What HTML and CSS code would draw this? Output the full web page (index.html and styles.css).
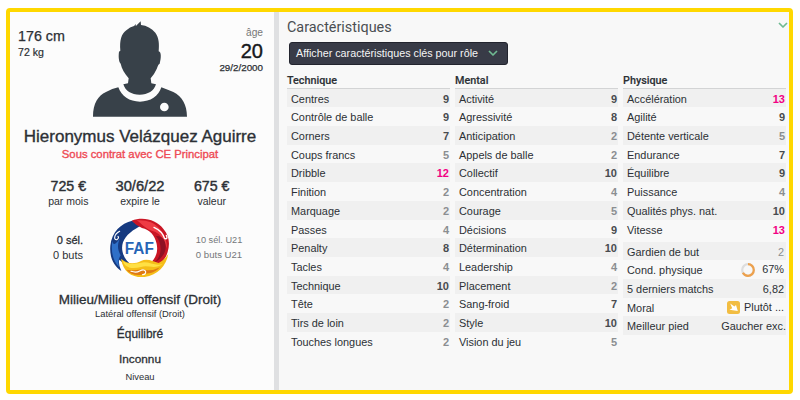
FILE: index.html
```html
<!DOCTYPE html>
<html lang="fr">
<head>
<meta charset="utf-8">
<title>Hieronymus Velázquez Aguirre</title>
<link rel="stylesheet" href="styles.css">
</head>
<body>
<main class="frame">
  <section class="profile">
    <header class="top">
      <div class="body-size"><div class="height">176 cm</div><div class="weight">72 kg</div></div>
      <svg class="avatar" viewBox="25 20 282 287">
        <path fill="#384149" d="M25 307C25 268 40 244 64 233Q83 223 101 219C111 246 134 262 166 262C198 262 221 246 230 219Q248 226 266 233C292 246 307 271 307 307Z"/>
        <path fill="#384149" d="M116 210L130 207L132 192C120 178 111 163 108 148C102 142 101 125 103 112L107 109C104 79 110 58 125 48Q136 38 148 35L154 29L153 36L168 21L169 32C186 34 201 42 212 55C223 70 224 89 222 111C230 112 230 130 225 148C220 150 220 155 216 164Q209 180 198 192L200 207L214 210C208 230 190 241 165 241C140 241 122 230 116 210Z"/>
        <circle cx="239" cy="278" r="13" fill="#fcfcfc"/>
      </svg>
      <div class="age-box"><div class="age-label">âge</div><div class="age">20</div><div class="birth">29/2/2000</div></div>
    </header>
    <h1 class="name">Hieronymus Velázquez Aguirre</h1>
    <div class="contract">Sous contrat avec CE Principat</div>
    <div class="facts">
      <div><div class="fact">725 €</div><div class="fact-label">par mois</div></div>
      <div><div class="fact wide">30/6/22</div><div class="fact-label">expire le</div></div>
      <div><div class="fact">675 €</div><div class="fact-label">valeur</div></div>
    </div>
    <div class="national">
      <div class="caps"><div class="medium">0 sél.</div><div>0 buts</div></div>
      <svg class="crest" viewBox="12 12 184 184">
        <circle cx="104" cy="104" r="90" fill="#fff"/>
        <path fill="#163a80" d="M82 23C48 30 20 58 16 98C13 132 25 158 49 174Q39 153 43 140C56 153 69 158 82 158C56 140 46 112 54 88C62 66 84 50 112 36Q92 34 82 23Z"/>
        <path fill="#2f70c8" d="M22 84C17 119 25 145 42 162C38 145 42 134 47 127C36 108 37 90 46 76C33 92 26 101 22 84Z"/>
        <path fill="none" stroke="#fff" stroke-width="3.5" stroke-linecap="round" d="M44 55C25 65 26 83 36 80Q43 74 39 70"/>
        <path fill="#c91625" d="M80 23C113 10 155 19 176 49C192 68 196 91 188 117C182 139 168 155 144 161L132 154C153 137 160 116 155 92C150 68 134 49 111 45Q94 38 80 23Z"/>
        <path fill="#ee3b45" d="M95 22C124 20 148 28 164 47C177 61 188 86 185 105C175 75 163 60 145 55C122 49 110 32 95 22Z"/>
        <path fill="#8f1024" d="M153 69C171 90 174 127 147 150C174 136 188 112 180 87Q174 69 153 69Z"/>
        <path fill="none" stroke="#fff" stroke-width="4" stroke-linecap="round" d="M147 43Q172 54 179 77Q190 79 184 67"/>
        <path fill="#f5bd18" d="M48 137C68 155 90 153 108 144C126 135 144 145 161 150Q178 142 190 123C184 158 158 187 119 192C82 195 55 178 48 137Z"/>
        <path fill="#ffe044" d="M54 145C77 158 97 151 117 148C138 148 154 161 174 152C151 171 130 155 108 162C81 170 59 164 54 145Z"/>
        <path fill="#df7a14" d="M64 170C87 177 99 166 121 171Q142 175 165 163C147 184 127 180 110 185Q83 190 64 170Z"/>
        <path fill="none" stroke="#fff" stroke-width="3.5" stroke-linecap="round" d="M78 175Q94 180 104 174Q119 167 122 176Q123 184 113 185"/>
        <text x="103" y="122" text-anchor="middle" textLength="87" lengthAdjust="spacingAndGlyphs" class="crest-text">FAF</text>
      </svg>
      <div class="youth"><div>10 sél. U21</div><div class="youth-goals">0 buts U21</div></div>
    </div>
    <div class="position">Milieu/Milieu offensif (Droit)</div>
    <div class="position-alt">Latéral offensif (Droit)</div>
    <div class="style">Équilibré</div>
    <div class="level">Inconnu</div>
    <div class="level-label">Niveau</div>
  </section>
  <section class="attributes">
    <div class="attr-head"><h2>Caractéristiques</h2>
      <svg class="collapse" viewBox="0 0 10 6"><path d="M1 1l4 4 4-4"/></svg></div>
    <button class="role">Afficher caractéristiques clés pour rôle<svg viewBox="0 0 10 6"><path d="M1 1l4 4 4-4"/></svg></button>
    <div class="columns">
      <div class="column">
        <h3>Technique</h3>
        <ul>
          <li>Centres<b>9</b></li>
          <li>Contrôle de balle<b>9</b></li>
          <li>Corners<b>7</b></li>
          <li>Coups francs<b class="low">5</b></li>
          <li>Dribble<b class="high">12</b></li>
          <li>Finition<b class="low">2</b></li>
          <li>Marquage<b class="low">2</b></li>
          <li>Passes<b class="low">4</b></li>
          <li>Penalty<b>8</b></li>
          <li>Tacles<b class="low">4</b></li>
          <li>Technique<b>10</b></li>
          <li>Tête<b class="low">2</b></li>
          <li>Tirs de loin<b class="low">2</b></li>
          <li>Touches longues<b class="low">2</b></li>
        </ul>
      </div>
      <div class="column">
        <h3>Mental</h3>
        <ul>
          <li>Activité<b>9</b></li>
          <li>Agressivité<b>8</b></li>
          <li>Anticipation<b class="low">2</b></li>
          <li>Appels de balle<b class="low">2</b></li>
          <li>Collectif<b>10</b></li>
          <li>Concentration<b class="low">4</b></li>
          <li>Courage<b class="low">5</b></li>
          <li>Décisions<b>9</b></li>
          <li>Détermination<b>10</b></li>
          <li>Leadership<b class="low">4</b></li>
          <li>Placement<b class="low">2</b></li>
          <li>Sang-froid<b>7</b></li>
          <li>Style<b>10</b></li>
          <li>Vision du jeu<b class="low">5</b></li>
        </ul>
      </div>
      <div class="column">
        <h3>Physique</h3>
        <ul>
          <li>Accélération<b class="high">13</b></li>
          <li>Agilité<b>9</b></li>
          <li>Détente verticale<b class="low">5</b></li>
          <li>Endurance<b>7</b></li>
          <li>Équilibre<b>9</b></li>
          <li>Puissance<b class="low">4</b></li>
          <li>Qualités phys. nat.<b>10</b></li>
          <li>Vitesse<b class="high">13</b></li>
        </ul>
        <ul class="status">
          <li>Gardien de but<span class="low">2</span></li>
          <li>Cond. physique<span class="value"><svg class="ring" viewBox="0 0 14 14"><circle cx="7" cy="7" r="5.8" stroke="#dedede"/><circle cx="7" cy="7" r="5.8" stroke="#eda14d" pathLength="100" stroke-dasharray="67 33" transform="rotate(-90 7 7)"/></svg>67%</span></li>
          <li>5 derniers matchs<span>6,82</span></li>
          <li>Moral<span class="value moral"><svg class="mood" viewBox="0 0 13 13"><rect width="13" height="13" rx="2.5" fill="#f2bd42"/><path fill="#fff" d="M3.2 2.4L7.4 5.4L9 4L10.8 10L2.5 8.8L5.2 7.3Z"/></svg>Plutôt ...</span></li>
          <li>Meilleur pied<span class="foot">Gaucher exc.</span></li>
        </ul>
      </div>
    </div>
  </section>
</main>
</body>
</html>
```
FILE: styles.css
```css
* { box-sizing: border-box; }
body {
  margin: 0;
  width: 800px;
  height: 400px;
  padding: 7.7px 0 0 6px;
  background: #fff;
  color: #2c3035;
  font-family: "Liberation Sans", Arial, sans-serif;
  font-size: 11px;
  white-space: nowrap;
  overflow: hidden;
}
h1, h2, h3, ul { margin: 0; padding: 0; font-weight: 400; list-style: none; }
.frame {
  display: flex;
  width: 787px;
  height: 386.5px;
  border: 4.3px solid #ffd800;
  border-radius: 4px;
  background: #f8f8f8;
}
.profile {
  width: 269px;
  flex: none;
  padding-right: 4px;
  border-right: 5px solid #dfe0e2;
  background: #fcfcfc;
  text-align: center;
}
.top { display: flex; height: 113px; padding: 0 1px 0 8px; }
.body-size { width: 75px; text-align: left; padding-top: 16px; }
.height { font-size: 14.3px; line-height: 16px; -webkit-text-stroke: .25px; }
.weight { font-size: 10.6px; line-height: 16px; -webkit-text-stroke: .2px; }
.avatar { width: 94px; height: 95.7px; margin-top: 9.7px; flex: none; }
.age-box { flex: 1; text-align: right; padding-top: 13px; padding-right: 6px; }
.age-label { font-size: 10.2px; line-height: 16px; color: #777; }
.age { font-size: 20px; line-height: 20px; color: #17191c; -webkit-text-stroke: .4px; }
.birth { font-size: 9.8px; line-height: 13px; -webkit-text-stroke: .25px; }
.name { font-size: 17px; line-height: 24px; -webkit-text-stroke: .35px; }
.contract { font-size: 11.3px; line-height: 10px; color: #ee4b55; -webkit-text-stroke: .35px; }
.facts { display: flex; justify-content: center; margin-top: 19px; height: 32px; }
.facts > div { width: 71.7px; }
.fact { font-size: 14.2px; line-height: 17px; -webkit-text-stroke: .4px; }
.wide { font-size: 14.7px; }
.fact-label { font-size: 10.5px; line-height: 12px; }
.national { display: flex; align-items: center; height: 76px; line-height: 14.5px; }
.caps { width: 73px; text-align: right; }
.medium { -webkit-text-stroke: .3px; }
.crest { width: 61.3px; height: 61.3px; margin: 0 26px 0 25.5px; flex: none; }
.crest-text { font: bold 47px "Liberation Sans", Arial, sans-serif; fill: #2765b6; }
.youth { color: #74777a; font-size: 9.2px; text-align: left; }
.youth-goals { font-size: 9.6px; }
.position { margin-top: 4px; font-size: 13.5px; line-height: 20px; -webkit-text-stroke: .3px; }
.position-alt { font-size: 9.4px; line-height: 8px; }
.style { margin-top: 8px; font-size: 11.9px; line-height: 16px; -webkit-text-stroke: .3px; }
.level { margin-top: 9px; font-size: 11.8px; line-height: 16px; -webkit-text-stroke: .3px; }
.level-label { margin-top: 2px; font-size: 9.4px; line-height: 16px; }
.attributes { flex: 1; min-width: 0; padding: 5px 2px 0 8px; }
.attr-head { display: flex; justify-content: space-between; height: 25px; }
h2 { font: 400 14.4px/21px Roboto, sans-serif; color: #4a4e52; }
.collapse { width: 10px; height: 6px; margin: 5px 0 0; position: relative; left: 1px; }
svg path { stroke-linejoin: round; }
.collapse path, .role path { fill: none; stroke: #6fba92; stroke-width: 1.7; }
.role {
  display: flex;
  align-items: center;
  width: 219px;
  height: 23px;
  margin: 0 0 0 2px;
  padding: 0 0 0 6px;
  border: 1px solid #22242e;
  border-radius: 3px;
  background: #383b47;
  color: #f5f5f5;
  font: 10.75px "Liberation Sans", Arial, sans-serif;
}
.role svg { width: 10px; height: 6px; margin-left: 10px; }
.columns { display: grid; grid-template-columns: repeat(3, 163px); column-gap: 5px; margin-top: 7px; }
h3 { height: 17px; border-bottom: 1px solid #d3d4d5; font: 500 10.8px/18px Roboto, sans-serif; -webkit-text-stroke: .15px; }
li { display: flex; justify-content: space-between; height: 18.69px; padding: 0 1px 0 4px; line-height: 21px; font-size: 10.9px; }
li:nth-child(odd) { background: #f0f0f0; }
li b { color: #484b4f; font-size: 11px; }
li .low { color: #8b8e91; }
li .high { color: #f20083; }
.status { margin-top: 3.5px; }
.status li { padding-right: 2px; }
.value { display: flex; align-items: center; gap: 7px; }
.ring { width: 14px; height: 14px; fill: none; stroke-width: 2.2; }
.moral { gap: 4px; }
.mood { width: 13px; height: 13px; }
.foot { margin-right: -2px; }
```
